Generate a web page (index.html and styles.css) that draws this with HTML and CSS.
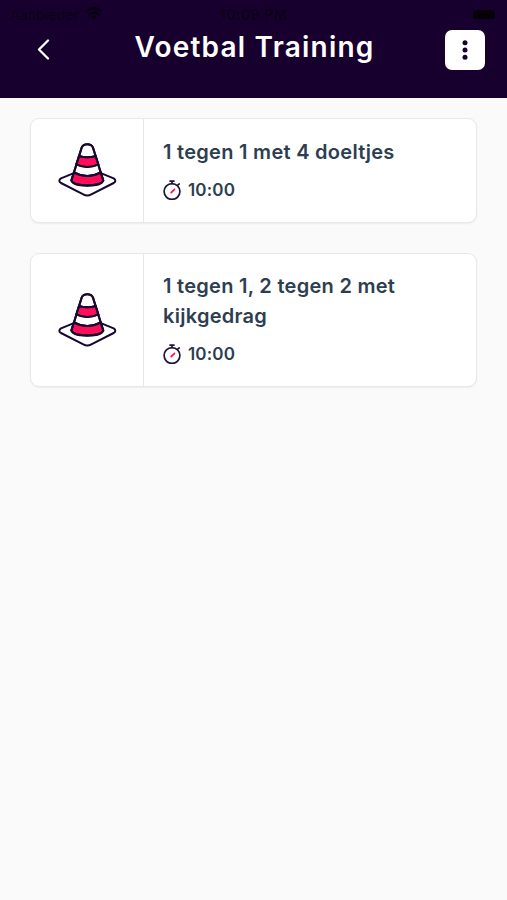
FILE: index.html
```html
<!DOCTYPE html>
<html lang="nl">
<head>
<meta charset="utf-8">
<meta name="viewport" content="width=device-width, initial-scale=1">
<title>Voetbal Training</title>
<link rel="stylesheet" href="styles.css">
</head>
<body>
<svg class="symbols" aria-hidden="true">
  <symbol id="cone" viewBox="0 0 180 168">
    <path d="M53 88 L9 106 Q-1 113 9 120 L76 154 Q88 161 100 154 L167 120 Q177 113 167 106 L123 88" fill="#fff"/>
    <path d="M41 111 L71 14 Q75 4 88 4 Q101 4 105 14 L135 111 Q135 128 88 128 Q41 128 41 111Z" fill="#fff"/>
    <path d="M63 39 Q88 47 113 39 L121 64 Q88 80 55 64Z" fill="#ff0c5b"/>
    <path d="M48 88 Q88 110 128 88 L136 113 Q129 127 88 127 Q47 127 40 113Z" fill="#ff0c5b"/>
    <path d="M63 39 Q88 47 113 39 M55 64 Q88 80 121 64 M48 88 Q88 110 128 88"/>
    <path d="M40 113 L71 14 Q75 4 88 4 Q101 4 105 14 L136 113 Q129 127 88 127 Q47 127 40 113Z"/>
  </symbol>
  <symbol id="timer" viewBox="0 0 20 20">
    <circle cx="9" cy="11.5" r="7.9"/>
    <path d="M7 1.1h4M9 1.2v2.4M14.9 4.9l1.3-.9"/>
    <path class="hand" d="M8.2 12.6l3.3-3.2"/>
  </symbol>
</svg>

<header class="header">
  <div class="status">
    <span class="carrier">Aanbieder
      <svg class="wifi" viewBox="0 0 18 14"><path d="M1 4.5Q9-2 17 4.5M3.8 7.6Q9 3.5 14.2 7.6"/><path class="core" d="M5.8 9.8Q9 7.4 12.2 9.8L9 13Z"/></svg>
    </span>
    <span class="clock">10:09 PM</span>
    <span class="battery"></span>
  </div>
  <nav class="bar">
    <a class="back" aria-label="Terug"><svg viewBox="0 0 13 21"><path d="M11 1.5L2 10.5L11 19.5"/></svg></a>
    <h1 class="title">Voetbal Training</h1>
    <button class="more" aria-label="Meer"><svg viewBox="0 0 6 20"><circle cx="3" cy="2.7" r="2.5"/><circle cx="3" cy="10" r="2.5"/><circle cx="3" cy="17.3" r="2.5"/></svg></button>
  </nav>
</header>

<main class="list">
  <article class="card">
    <div class="thumb"><svg class="cone"><use href="#cone"/></svg></div>
    <div class="body">
      <h2 class="name">1 tegen 1 met 4 doeltjes</h2>
      <p class="time"><svg class="timer"><use href="#timer"/></svg>10:00</p>
    </div>
  </article>
  <article class="card">
    <div class="thumb"><svg class="cone"><use href="#cone"/></svg></div>
    <div class="body">
      <h2 class="name"><span class="wide">1 tegen 1, 2 tegen 2 met</span> kijkgedrag</h2>
      <p class="time"><svg class="timer"><use href="#timer"/></svg>10:00</p>
    </div>
  </article>
</main>
</body>
</html>
```
FILE: styles.css
```css
* { box-sizing: border-box; margin: 0; padding: 0; }
body {
  min-height: 900px;
  background: #fafafa;
  color: #2d3e50;
  font-family: Inter, "Liberation Sans", sans-serif;
}
svg { display: block; fill: none; }
.symbols { position: absolute; width: 0; height: 0; }

.header { height: 98px; background: #18002e; color: #fff; }
.status {
  display: grid;
  grid-template-columns: 1fr auto 1fr;
  align-items: center;
  height: 28px;
  padding: 0 10px;
  color: #0b0018;
  font-size: 14px;
}
.carrier { display: flex; align-items: center; gap: 6px; letter-spacing: 0.1px; }
.wifi { width: 18px; height: 14px; stroke: #080010; stroke-width: 2.6; }
.wifi .core { fill: #080010; stroke: none; }
.clock { font-weight: 600; font-size: 14px; letter-spacing: 0.5px; }
.battery {
  justify-self: end;
  width: 22px;
  height: 9px;
  margin-right: 2px;
  border-radius: 3px;
  background: #050009;
}
.bar {
  display: grid;
  grid-template-columns: 40px 1fr 40px;
  align-items: center;
  height: 43px;
  padding: 0 22px 0 24px;
}
.back svg { width: 13px; height: 21px; margin-left: 13px; stroke: #fff; stroke-width: 2.3; stroke-linecap: round; stroke-linejoin: round; }
.title {
  padding-bottom: 5px;
  font-size: 28px;
  font-weight: 600;
  line-height: 34px;
  letter-spacing: 1.2px;
  text-align: center;
  white-space: nowrap;
}
.more {
  display: grid;
  place-items: center;
  width: 40px;
  height: 40px;
  border: 0;
  border-radius: 7px;
  background: #fff;
}
.more svg { width: 6px; height: 20px; fill: #18002e; }

.list { display: flex; flex-direction: column; gap: 30px; padding: 20px 30px; }
.card {
  display: grid;
  grid-template-columns: 113px 1fr;
  border: 1px solid #e8e8e8;
  border-radius: 9px;
  background: #fff;
  box-shadow: 0 1px 2px rgba(0, 0, 0, 0.06);
}
.thumb { display: grid; place-items: center; border-right: 1px solid #e8e8e8; }
.cone {
  width: 60px;
  height: 56px;
  margin: 2px 0 0 2px;
  stroke: #18082f;
  stroke-width: 6;
  stroke-linejoin: round;
  stroke-linecap: round;
}
.body { padding: 18px 19px 17px; }
.name { padding-top: 0.5px; font-size: 20px; font-weight: 600; line-height: 29.5px; letter-spacing: 0.28px; }
.wide { white-space: nowrap; }
.time {
  display: flex;
  align-items: center;
  gap: 5px;
  height: 29px;
  margin-top: 8px;
  margin-bottom: 0.5px;
  font-size: 17px;
  font-weight: 600;
  letter-spacing: 0.15px;
}
.timer { width: 20px; height: 20px; margin-top: 1px; stroke: #221338; stroke-width: 1.7; stroke-linecap: round; }
.hand { stroke: #ff0c5b; }
```
